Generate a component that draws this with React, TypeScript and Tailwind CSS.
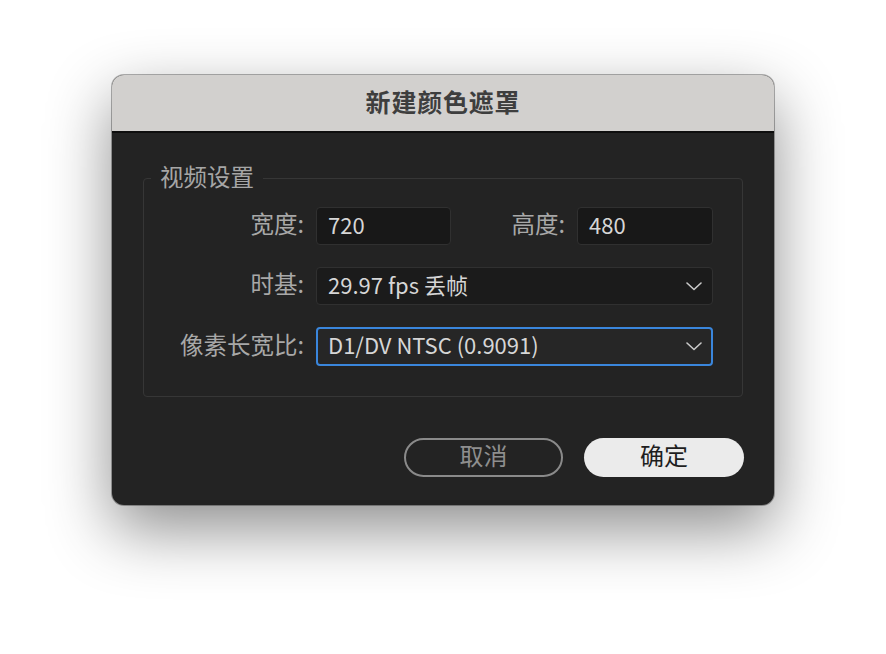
import React from "react"

const Chevron = () => (
  <svg width="16" height="9" viewBox="0 0 16 9" fill="none" className="shrink-0">
    <polyline points="1,1 8,7.5 15,1" stroke="#c9c9c9" strokeWidth="1.6" strokeLinecap="round" strokeLinejoin="round" />
  </svg>
)

function Label({ children, className = "" }: { children: React.ReactNode; className?: string }) {
  return <span className={`text-right text-[23.5px] leading-none text-[#a8a8a8] -translate-y-[2px] ${className}`}>{children}</span>
}

export default function App() {
  return (
    <div className="w-[886px] h-[654px] bg-white pl-[112px] pt-[75px] font-['Noto_Sans_CJK_SC','Noto_Sans',sans-serif]">
      <div className="w-[662px] h-[430px] rounded-[12px] overflow-hidden flex flex-col bg-[#232323] shadow-[0_0_0_1px_rgba(0,0,0,0.3),0_24px_64px_rgba(0,0,0,0.45)]">
        {/* Title bar */}
        <div className="h-[58px] shrink-0 bg-[#d2d0ce] border-b-2 border-[#0e0e0e] flex items-center justify-center">
          <span className="text-[25px] font-bold text-[#3e3e3e] tracking-[0.8px] -translate-y-[1px]">新建颜色遮罩</span>
        </div>

        {/* Body */}
        <div className="flex flex-col px-[31px] pt-[32px]">
          <fieldset className="border border-[#363636] rounded-[4px] pt-[16px] pb-[30px] pr-[29px]">
            <legend className="ml-[7px] px-[9px] text-[23.5px] leading-[26px] text-[#a6a6a6]">
              <span className="inline-block -translate-y-[2px]">视频设置</span>
            </legend>

            <div className="flex flex-col gap-[22px]">
              {/* Row 1 */}
              <div className="flex items-center">
                <Label className="w-[160px]">宽度:</Label>
                <div className="ml-[12px] w-[135px] h-[38px] rounded-[4px] bg-[#181818] border border-[#303030] flex items-center pl-[11px] pb-[3px] text-[22px] text-[#d6d6d6]">
                  720
                </div>
                <Label className="flex-1">高度:</Label>
                <div className="ml-[12px] w-[136px] h-[38px] rounded-[4px] bg-[#181818] border border-[#303030] flex items-center pl-[11px] pb-[3px] text-[22px] text-[#d6d6d6]">
                  480
                </div>
              </div>

              {/* Row 2 */}
              <div className="flex items-center">
                <Label className="w-[160px]">时基:</Label>
                <div className="ml-[12px] flex-1 h-[38px] rounded-[4px] bg-[#1b1b1b] border border-[#303030] flex items-center justify-between pl-[11px] pr-[10px] text-[22px] text-[#d6d6d6]">
                  <span className="-translate-y-[2px]">29.97 fps 丢帧</span>
                  <Chevron />
                </div>
              </div>

              {/* Row 3 */}
              <div className="flex items-center">
                <Label className="w-[160px]">像素长宽比:</Label>
                <div className="ml-[12px] flex-1 h-[39px] rounded-[4px] bg-[#262626] border-2 border-[#3a86dc] flex items-center justify-between pl-[10px] pr-[9px] text-[22px] text-[#d6d6d6]">
                  <span className="-translate-y-[2px]">D1/DV NTSC (0.9091)</span>
                  <Chevron />
                </div>
              </div>
            </div>
          </fieldset>

          {/* Buttons */}
          <div className="mt-[41px] flex justify-end gap-[21px] -mr-[1px]">
            <button className="w-[159px] h-[39px] rounded-full border-2 border-[#8a8a8a] pb-[5px] text-[24px] text-[#8e8e8e] flex items-center justify-center">
              取消
            </button>
            <button className="w-[160px] h-[39px] rounded-full bg-[#ebebeb] pb-[5px] text-[24px] text-[#1e1e1e] flex items-center justify-center">
              确定
            </button>
          </div>
        </div>
      </div>
    </div>
  )
}
